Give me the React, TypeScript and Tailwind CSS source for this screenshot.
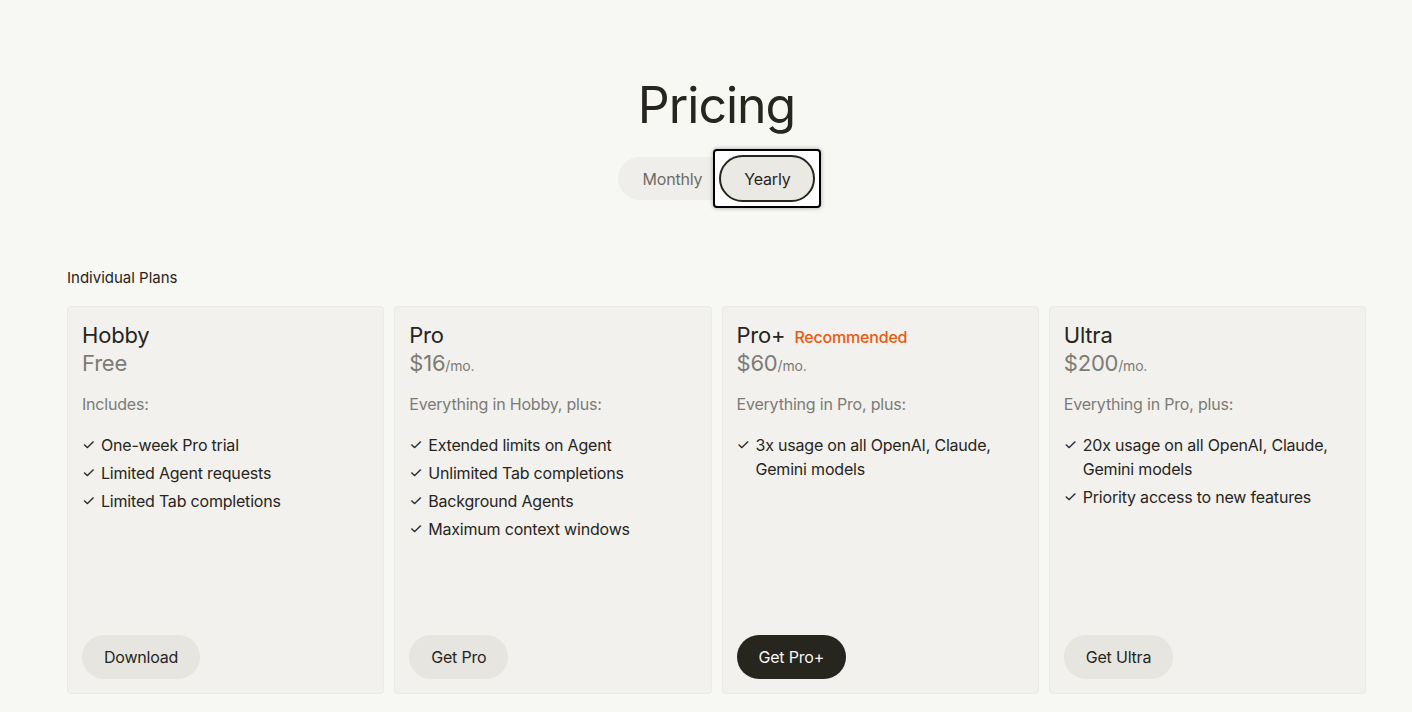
import React from "react";

type Plan = {
  name: string;
  badge?: string;
  price: string;
  per?: string;
  intro: string;
  features: string[];
  cta: string;
  primary?: boolean;
};

const plans: Plan[] = [
  {
    name: "Hobby",
    price: "Free",
    intro: "Includes:",
    features: ["One-week Pro trial", "Limited Agent requests", "Limited Tab completions"],
    cta: "Download",
  },
  {
    name: "Pro",
    price: "$16",
    per: "/mo.",
    intro: "Everything in Hobby, plus:",
    features: [
      "Extended limits on Agent",
      "Unlimited Tab completions",
      "Background Agents",
      "Maximum context windows",
    ],
    cta: "Get Pro",
  },
  {
    name: "Pro+",
    badge: "Recommended",
    price: "$60",
    per: "/mo.",
    intro: "Everything in Pro, plus:",
    features: ["3x usage on all OpenAI, Claude, Gemini models"],
    cta: "Get Pro+",
    primary: true,
  },
  {
    name: "Ultra",
    price: "$200",
    per: "/mo.",
    intro: "Everything in Pro, plus:",
    features: ["20x usage on all OpenAI, Claude, Gemini models", "Priority access to new features"],
    cta: "Get Ultra",
  },
];

function Card({ plan }: { plan: Plan }) {
  return (
    <div className="flex h-[388px] flex-col rounded-[4px] border border-[#ebeae5] bg-[#f2f1ed] px-[14px] pt-[14px] pb-[14px] tracking-[-0.2px]">
      <div className="flex h-7 items-baseline gap-[9px] text-[22px] leading-7 text-[#26251e]">
        <span>{plan.name}</span>
        {plan.badge && (
          <span className="text-[16px] leading-none font-medium text-[#e85a12]">{plan.badge}</span>
        )}
      </div>
      <div className="h-7 text-[22px] leading-7 text-[#7d7b76]">
        {plan.price}
        {plan.per && <span className="text-[14px] leading-none">{plan.per}</span>}
      </div>
      <div className="mt-[15px] text-[16px] leading-6 text-[#7d7b76]">{plan.intro}</div>
      <ul className="mt-[17px] flex flex-col gap-[4px] text-[16px] leading-6 text-[#26251e]">
        {plan.features.map((f) => (
          <li key={f} className="flex">
            <span className="w-[19px] shrink-0 text-[15px]">✓</span>
            <span className="pr-[10px]">{f}</span>
          </li>
        ))}
      </ul>
      <div className="mt-auto">
        <button
          className={
            plan.primary
              ? "h-[44px] rounded-full bg-[#26251e] px-[22px] text-[16px] tracking-[-0.2px] text-[#f7f7f4]"
              : "h-[44px] rounded-full bg-[#e6e5e0] px-[22px] text-[16px] tracking-[-0.2px] text-[#26251e]"
          }
        >
          {plan.cta}
        </button>
      </div>
    </div>
  );
}

export default function App() {
  return (
    <div
      className="min-h-[712px] bg-[#f7f7f4] text-[#26251e]"
      style={{ fontFamily: "Inter, 'Noto Sans', sans-serif" }}
    >
      <div className="ml-[67px] w-[1299px]">
        <div className="flex flex-col items-center pt-[77px]">
          <h1 className="text-[50px] leading-[56px] tracking-[-1px] text-[#26251e]">Pricing</h1>
          <div className="mt-[24px] flex h-[43px] items-center rounded-full bg-[#efeeea]">
            <button className="pl-[25px] pr-[17px] text-[16px] tracking-[-0.2px] text-[#6e6c67]">Monthly</button>
            <span className="relative inline-flex">
              <span className="absolute -inset-[6px] rounded-[4px] border-2 border-black bg-white shadow-[0_0_4px_rgba(0,0,0,0.35)]" />
              <button className="relative h-[47px] rounded-full border-2 border-[#26251e] bg-[#ebe9e4] px-[23px] text-[16px] tracking-[-0.2px] text-[#26251e]">
                Yearly
              </button>
            </span>
          </div>
        </div>
        <div className="mt-[68px]">
          <div className="text-[15px] leading-5 text-[#26251e]">Individual Plans</div>
          <div className="mt-[18px] grid grid-cols-4 gap-[10px]">
            {plans.map((p) => (
              <Card key={p.name} plan={p} />
            ))}
          </div>
        </div>
      </div>
    </div>
  );
}
